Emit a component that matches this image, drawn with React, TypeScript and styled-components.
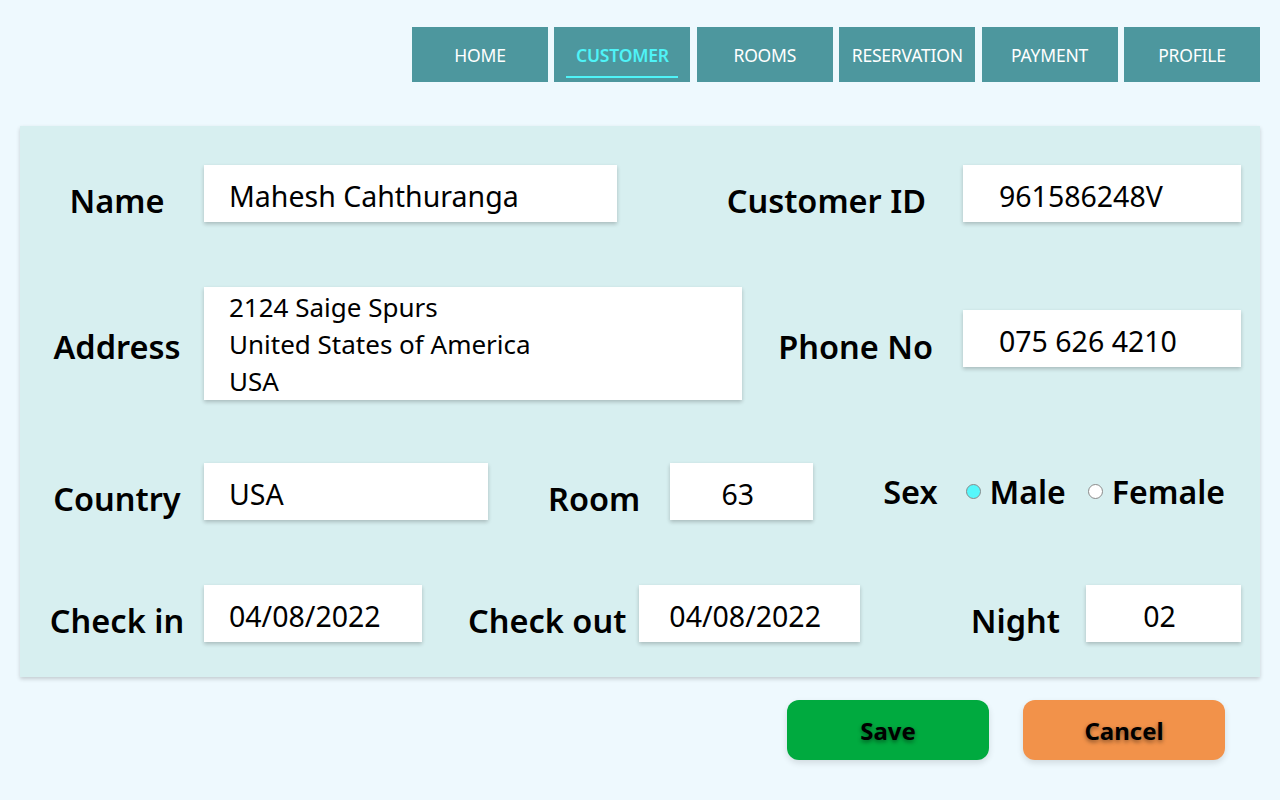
import React from "react";
import styled, { createGlobalStyle } from "styled-components";

const GlobalStyle = createGlobalStyle`
  * { box-sizing: border-box; }
  body {
    margin: 0;
    background: #eef9fe;
    font-family: "Noto Sans", "Open Sans", sans-serif;
    color: #000;
  }
`;

const navItems = ["HOME", "CUSTOMER", "ROOMS", "RESERVATION", "PAYMENT", "PROFILE"];

export default function App() {
  return (
    <Page>
      <GlobalStyle />
      <Nav>
        {navItems.map((item) => (
          <NavButton key={item} $active={item === "CUSTOMER"}>
            {item}
          </NavButton>
        ))}
      </Nav>

      <Card>
        <Row $height={57}>
          <Label $drop={14}>Name</Label>
          <TextBox defaultValue="Mahesh Cahthuranga" $width={413} />
          <RightGroup>
            <SideLabel $gap={37} $drop={14}>Customer ID</SideLabel>
            <TextBox defaultValue="961586248V" $width={278} $pad={36} />
          </RightGroup>
        </Row>

        <Row $height={113}>
          <Label $drop={5}>Address</Label>
          <AddressBox
            readOnly
            defaultValue={"2124 Saige Spurs\nUnited States of America\nUSA"}
          />
          <RightGroup>
            <SideLabel $gap={30} $drop={5}>Phone No</SideLabel>
            <TextBox defaultValue="075 626 4210" $width={278} $pad={36} $lift={10} />
          </RightGroup>
        </Row>

        <Row $height={57}>
          <Label>Country</Label>
          <TextBox defaultValue="USA" $width={284} />
          <SideLabel $gap={30} $left={60}>Room</SideLabel>
          <TextBox defaultValue="63" $width={143} $center />
          <SexGroup>
            <SexLabel>Sex</SexLabel>
            <RadioOption>
              <Radio $checked />
              Male
            </RadioOption>
            <RadioOption>
              <Radio />
              Female
            </RadioOption>
          </SexGroup>
        </Row>

        <Row $height={57}>
          <Label>Check in</Label>
          <TextBox defaultValue="04/08/2022" $width={218} />
          <SideLabel $gap={13} $left={46}>Check out</SideLabel>
          <TextBox defaultValue="04/08/2022" $width={221} $pad={30} />
          <RightGroup>
            <SideLabel $gap={26}>Night</SideLabel>
            <TextBox defaultValue="02" $width={155} $center />
          </RightGroup>
        </Row>
      </Card>

      <Actions>
        <ActionButton $color="#00aa3f">Save</ActionButton>
        <ActionButton $color="#f2924a">Cancel</ActionButton>
      </Actions>
    </Page>
  );
}

// Estilização
const Page = styled.div`
  width: 1280px;
  height: 800px;
  padding: 27px 20px 0 20px;
  display: flex;
  flex-direction: column;
`;

const Nav = styled.nav`
  display: flex;
  justify-content: flex-end;
  gap: 6.4px;
`;

const NavButton = styled.div<{ $active?: boolean }>`
  position: relative;
  width: 136px;
  height: 55px;
  background: #4d979e;
  color: ${(p) => (p.$active ? "#4ff3f7" : "#ffffff")};
  font-size: 17.5px;
  font-weight: ${(p) => (p.$active ? 600 : 400)};
  display: flex;
  align-items: center;
  justify-content: center;
  letter-spacing: -0.2px;

  &::after {
    content: "";
    display: ${(p) => (p.$active ? "block" : "none")};
    position: absolute;
    left: 12px;
    right: 12px;
    bottom: 4px;
    height: 2px;
    background: #4ff3f7;
  }
`;

const Card = styled.section`
  margin-top: 44px;
  height: 551px;
  background: #d7eff0;
  box-shadow: 0 2px 4px rgba(0, 0, 0, 0.18);
  padding: 39px 19px 0 27px;
  display: flex;
  flex-direction: column;
  gap: 65px;
`;

const Row = styled.div<{ $height: number }>`
  display: flex;
  align-items: center;
  height: ${(p) => p.$height}px;
  &:nth-child(3) { margin-top: -2px; }
`;

const Label = styled.div<{ $drop?: number }>`
  width: 140px;
  margin-right: 17px;
  text-align: center;
  font-size: 32.5px;
  font-weight: 600;
  white-space: nowrap;
  line-height: 1.2;
  margin-top: ${(p) => p.$drop ?? 13}px;
`;

const SideLabel = styled.div<{ $gap: number; $left?: number; $drop?: number }>`
  font-size: 32.5px;
  font-weight: 600;
  white-space: nowrap;
  line-height: 1.2;
  margin-top: ${(p) => p.$drop ?? 13}px;
  margin-right: ${(p) => p.$gap}px;
  margin-left: ${(p) => p.$left ?? 0}px;
`;

const RightGroup = styled.div`
  margin-left: auto;
  display: flex;
  align-items: center;
`;

const TextBox = styled.input.attrs({ readOnly: true })<{
  $width: number;
  $pad?: number;
  $center?: boolean;
  $lift?: number;
}>`
  width: ${(p) => p.$width}px;
  height: 57px;
  border: none;
  outline: none;
  background: #ffffff;
  box-shadow: 0 2px 4px rgba(0, 0, 0, 0.22);
  padding: 4px ${(p) => (p.$center ? 8 : 0)}px 0 ${(p) => (p.$center ? 0 : p.$pad ?? 25)}px;
  margin-bottom: ${(p) => p.$lift ?? 0}px;
  text-align: ${(p) => (p.$center ? "center" : "left")};
  font-family: "Noto Sans", "Open Sans", sans-serif;
  font-size: 28.5px;
  color: #000;
`;

const AddressBox = styled.textarea`
  width: 538px;
  height: 113px;
  border: none;
  outline: none;
  resize: none;
  overflow: hidden;
  background: #ffffff;
  box-shadow: 0 2px 4px rgba(0, 0, 0, 0.22);
  padding: 2px 0 0 25px;
  font-family: "Noto Sans", "Open Sans", sans-serif;
  font-size: 26px;
  line-height: 37px;
  color: #000;
`;

const SexGroup = styled.div`
  margin-left: auto;
  margin-right: 16px;
  display: flex;
  align-items: center;
`;

const SexLabel = styled.div`
  font-size: 32.5px;
  font-weight: 600;
  margin-right: 28px;
`;

const RadioOption = styled.label`
  display: flex;
  align-items: center;
  gap: 9px;
  font-size: 32px;
  font-weight: 600;
  & + & {
    margin-left: 22px;
  }
`;

const Radio = styled.span<{ $checked?: boolean }>`
  width: 15px;
  height: 15px;
  border-radius: 50%;
  border: 1px solid #8a8a8a;
  background: ${(p) => (p.$checked ? "#55f7fb" : "#ffffff")};
`;

const Actions = styled.div`
  display: flex;
  justify-content: flex-end;
  gap: 34px;
  margin-top: 23px;
  padding-right: 35px;
`;

const ActionButton = styled.button<{ $color: string }>`
  width: 202px;
  height: 60px;
  border: none;
  border-radius: 12px;
  background: ${(p) => p.$color};
  box-shadow: 0 3px 6px rgba(0, 0, 0, 0.12);
  font-family: "Noto Sans", "Open Sans", sans-serif;
  font-size: 24px;
  font-weight: 700;
  color: #000;
  text-shadow: 0 2px 4px rgba(0, 0, 0, 0.45);
  cursor: pointer;
`;
